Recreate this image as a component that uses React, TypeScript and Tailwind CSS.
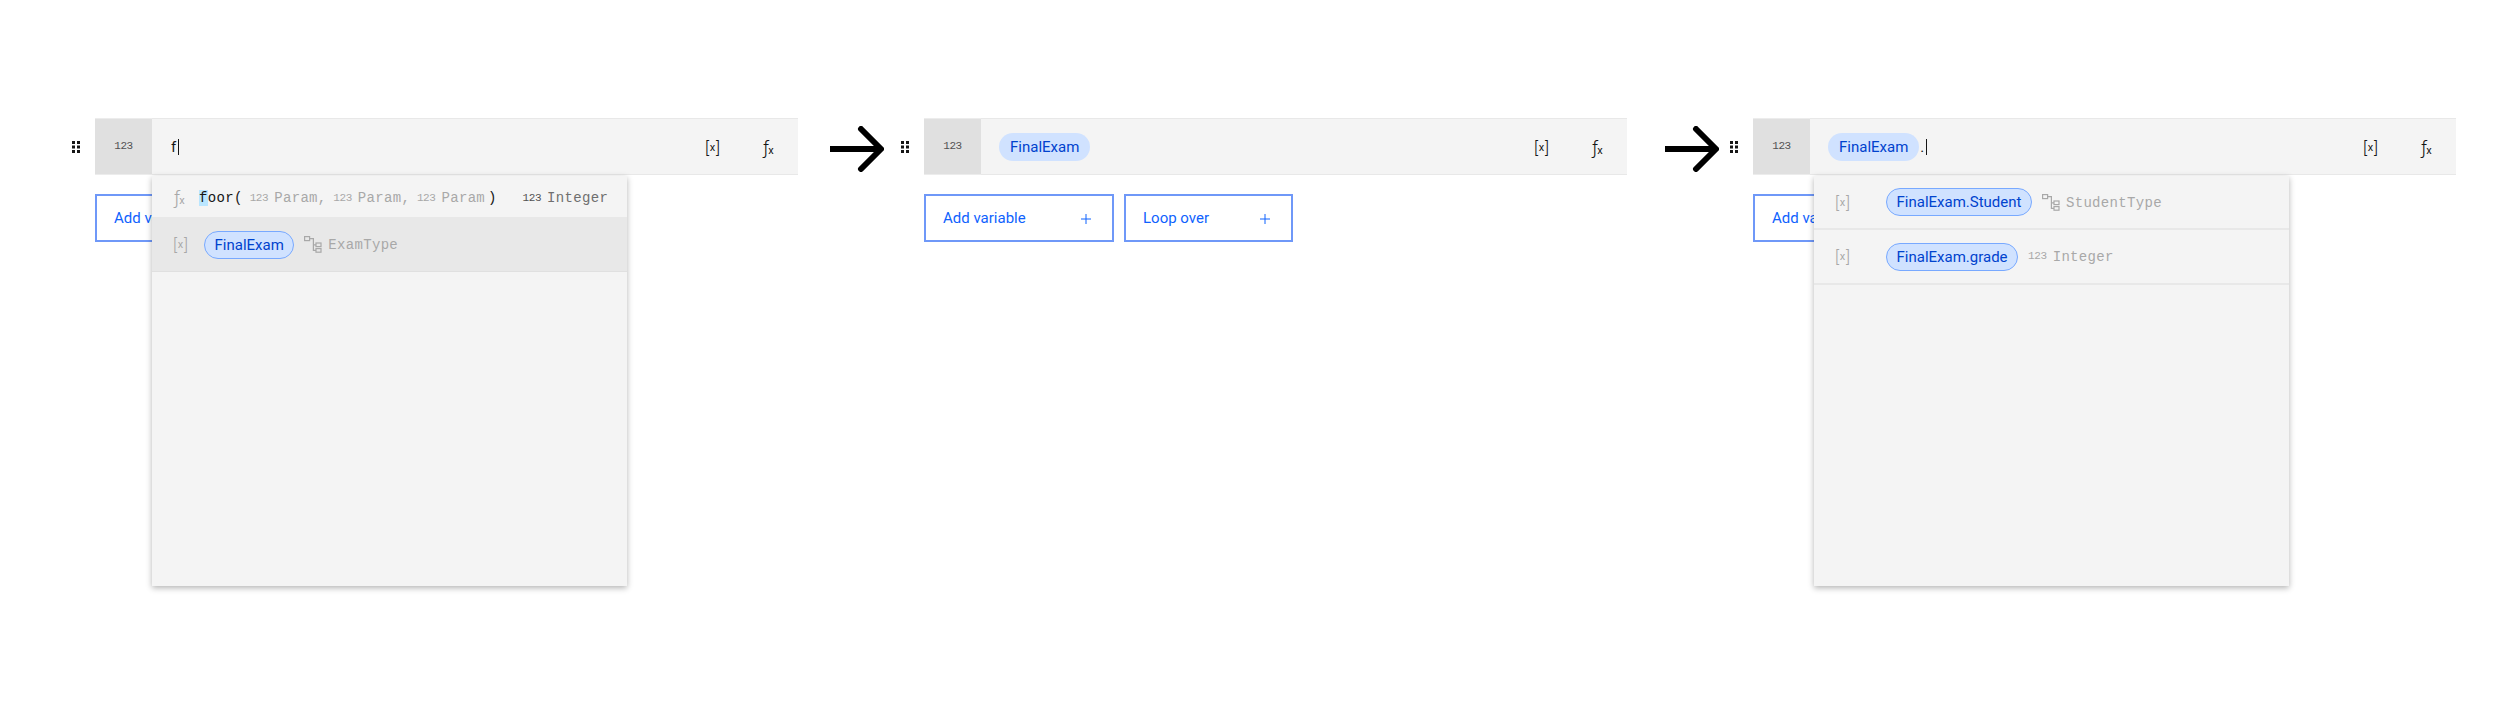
import React from 'react';

const SANS = "font-['Roboto',sans-serif]";
const MONO = "font-['Liberation_Mono',monospace]";

const GripIcon = () => (
  <svg width="8" height="12" viewBox="0 0 8 12" className="fill-[#161616]">
    <rect x="0" y="0" width="3" height="3" />
    <rect x="5" y="0" width="3" height="3" />
    <rect x="0" y="4.5" width="3" height="3" />
    <rect x="5" y="4.5" width="3" height="3" />
    <rect x="0" y="9" width="3" height="3" />
    <rect x="5" y="9" width="3" height="3" />
  </svg>
);

const ArrowIcon = () => (
  <svg width="56" height="46" viewBox="0 0 56 46" fill="none" stroke="#000" strokeWidth="6" strokeLinecap="round" strokeLinejoin="round">
    <path d="M2 23H52" strokeLinecap="butt" />
    <path d="M33 3L53 23L33 43" />
  </svg>
);

const PlusIcon = () => (
  <svg width="10" height="10" viewBox="0 0 10 10" stroke="#0f62fe" strokeWidth="1">
    <path d="M5 0V10M0 5H10" />
  </svg>
);

// Tree shaped "structured type" icon
const TreeIcon = () => (
  <svg width="18" height="17" viewBox="0 0 18 17" fill="none" stroke="#a8a8a8" strokeWidth="1.2">
    <rect x="0.6" y="0.6" width="5" height="4" />
    <rect x="12" y="7" width="5" height="3.6" />
    <rect x="12" y="12.6" width="5" height="3.6" />
    <path d="M5.6 2.6H9.4V14.4H12M9.4 8.8H12" />
  </svg>
);

const IntIcon = ({ dark }: { dark?: boolean }) => (
  <span className={`${MONO} text-[11px] tracking-[-0.4px] leading-none ${dark ? 'text-[#525252]' : 'text-[#a8a8a8]'}`}>123</span>
);

const VarIcon = ({ muted }: { muted?: boolean }) => (
  <span className={`${SANS} inline-flex w-[15px] items-center justify-between font-light leading-none ${muted ? 'text-[#a8a8a8]' : 'text-[#161616]'}`}>
    <span className="text-[17px]">[</span>
    <span className="text-[11px] font-normal">x</span>
    <span className="text-[17px]">]</span>
  </span>
);

const FxIcon = ({ muted }: { muted?: boolean }) => (
  <span className={`${SANS} inline-flex w-[13px] items-baseline font-light leading-none ${muted ? 'text-[#a8a8a8]' : 'text-[#161616]'}`}>
    <span className="text-[19px]">ƒ</span>
    <span className="ml-[-1px] text-[11px] font-normal">x</span>
  </span>
);

const Chip = ({ label, outlined }: { label: string; outlined?: boolean }) => (
  <span
    className={`${SANS} inline-flex h-[28px] items-center rounded-full bg-[#d0e2ff] pt-[1px] text-[15px] text-[#0043ce] ${outlined ? 'border border-[#78a9ff] px-[9.5px]' : 'px-[11px]'}`}
  >
    {label}
  </span>
);

const AddButton = ({ label, width }: { label: string; width: string }) => (
  <button className={`${SANS} ${width} flex h-[48px] items-center justify-between border-2 border-[#6f98f8] bg-white pl-[17px] pr-[21px] pt-[1px] text-[15px] text-[#0f62fe]`}>
    {label}
    <PlusIcon />
  </button>
);

const Param = () => (
  <span className={`${MONO} flex items-center gap-[6px] text-[14px] tracking-[0.32px] text-[#a8a8a8]`}>
    <IntIcon />
    Param
  </span>
);

const FunctionDropdown = () => (
  <div className="absolute left-[57px] top-[58px] z-10 h-[410px] w-[475px] bg-[#f4f4f4] shadow-[0_2px_6px_rgba(0,0,0,0.3)]">
    <div className="flex h-[41px] items-center pl-[22px] pt-[3px]">
      <span className="-mt-[2px] flex w-[25px] items-center"><FxIcon muted /></span>
      <span className={`${MONO} text-[14px] tracking-[0.32px] text-[#161616]`}>
        <span className="bg-[#bae6ff]">f</span>oor(
      </span>
      <span className="ml-[7px] flex items-center text-[#a8a8a8]">
        <Param /><span className={`${MONO} mr-[7px] text-[14px]`}>,</span>
        <Param /><span className={`${MONO} mr-[7px] text-[14px]`}>,</span>
        <Param />
      </span>
      <span className={`${MONO} ml-[3px] text-[14px] text-[#161616]`}>)</span>
      <span className={`${MONO} ml-[26px] flex items-center gap-[6px] text-[14px] tracking-[0.32px] text-[#6f6f6f]`}>
        <IntIcon dark />
        Integer
      </span>
    </div>
    <div className="flex h-[55px] items-center border-b border-[#e0e0e0] bg-[#e8e8e8] pl-[21px] pt-[1px]">
      <span className="flex w-[31px] items-center"><VarIcon muted /></span>
      <Chip label="FinalExam" outlined />
      <span className="ml-[10px] flex"><TreeIcon /></span>
      <span className={`${MONO} ml-[6px] pt-[2px] text-[14px] tracking-[0.32px] text-[#a8a8a8]`}>ExamType</span>
    </div>
  </div>
);

const MemberRow = ({ label, icon, type, height }: { label: string; icon: React.ReactNode; type: string; height: string }) => (
  <div className={`${height} flex items-center border-b-2 border-[#e8e8e8] pl-[21px]`}>
    <span className="flex w-[51px] items-center"><VarIcon muted /></span>
    <Chip label={label} outlined />
    <span className="ml-[10px] flex items-center">{icon}</span>
    <span className={`${MONO} ml-[6px] pt-[2px] text-[14px] tracking-[0.32px] text-[#a8a8a8]`}>{type}</span>
  </div>
);

const MemberDropdown = () => (
  <div className="absolute left-[61px] top-[58px] z-10 h-[410px] w-[475px] bg-[#f4f4f4] shadow-[0_2px_6px_rgba(0,0,0,0.3)]">
    <MemberRow height="h-[54px]" label="FinalExam.Student" icon={<TreeIcon />} type="StudentType" />
    <MemberRow height="h-[55px]" label="FinalExam.grade" icon={<IntIcon />} type="Integer" />
  </div>
);

const Panel = ({ children, dropdown, pad }: { children: React.ReactNode; dropdown?: React.ReactNode; pad: string }) => (
  <div className="flex shrink-0 items-start">
    <div className="flex h-[57px] w-[23px] items-center"><GripIcon /></div>
    <div className="relative w-[703px]">
      <div className="flex h-[57px]">
        <div className={`${MONO} flex w-[57px] items-center justify-center border-y border-[#ececec] bg-[#e0e0e0] text-[11px] tracking-[-0.4px] text-[#525252]`}>123</div>
        <div className={`${pad} flex flex-1 items-center border-y border-[#e8e8e8] bg-[#f4f4f4] pt-[1px]`}>
          <div className="flex flex-1 items-center">{children}</div>
          <span className="mr-[43px] flex items-center"><VarIcon /></span>
          <span className="mr-[22px] flex items-center"><FxIcon /></span>
        </div>
      </div>
      {dropdown}
      <div className="mt-[19px] flex gap-[10px]">
        <AddButton label="Add variable" width="w-[190px]" />
        <AddButton label="Loop over" width="w-[169px]" />
      </div>
    </div>
  </div>
);

const Caret = () => <span className="ml-[2px] inline-block h-[16px] w-px bg-[#161616]" />;

export default function App() {
  return (
    <div className="flex h-[706px] items-start bg-white pl-[72px] pt-[118px]">
      <Panel pad="pl-[19px]" dropdown={<FunctionDropdown />}>
        <span className={`${SANS} text-[15px] text-[#161616]`}>f</span>
        <Caret />
      </Panel>
      <div className="ml-[30px] mr-[17px] mt-[8px] shrink-0"><ArrowIcon /></div>
      <Panel pad="pl-[18px]">
        <Chip label="FinalExam" />
      </Panel>
      <div className="ml-[36px] mr-[11px] mt-[8px] shrink-0"><ArrowIcon /></div>
      <Panel pad="pl-[18px]" dropdown={<MemberDropdown />}>
        <Chip label="FinalExam" />
        <span className={`${SANS} ml-[1px] text-[15px] text-[#161616]`}>.</span>
        <Caret />
      </Panel>
    </div>
  );
}
